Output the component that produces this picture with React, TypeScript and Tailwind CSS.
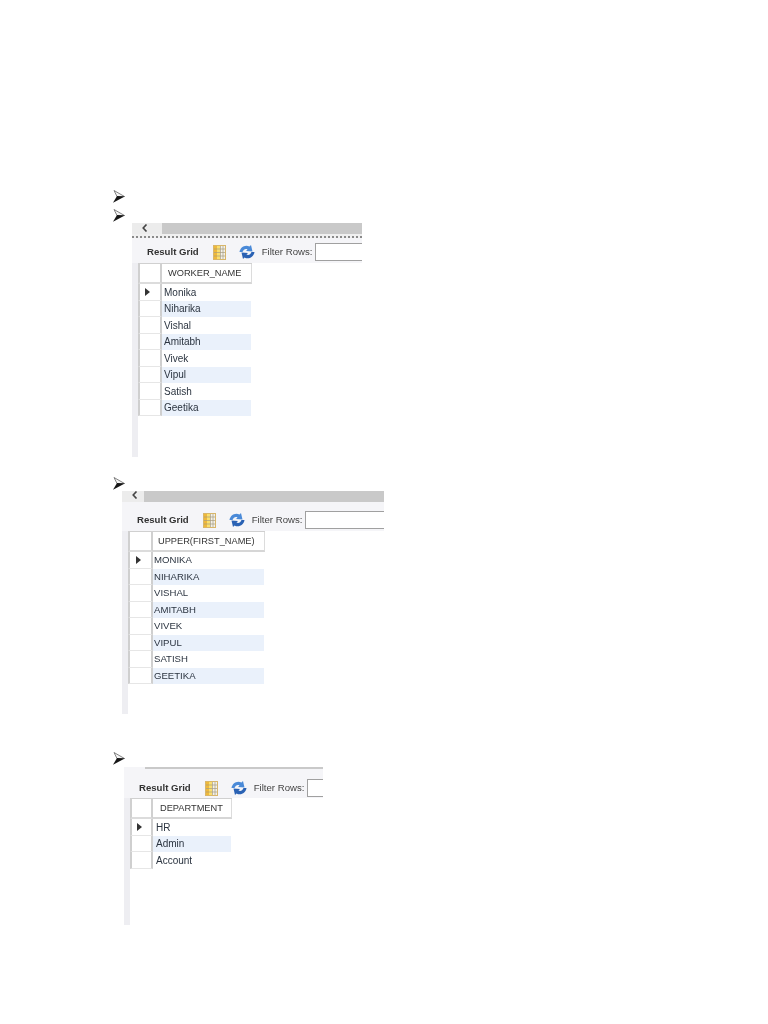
import React from "react";

function Bullet() {
  return (
    <svg width="12" height="13" viewBox="0 0 12 13" className="block">
      <path d="M1 .5 11.500 6.500H4Z" fill="#f4f4f4" stroke="#777" strokeWidth="0.9" />
      <path d="M4 6 11.800 6.500 0 12.800Z" fill="#161616" />
    </svg>
  );
}

function ColumnsIcon() {
  return (
    <svg width="13" height="15" viewBox="0 0 13 15" className="block">
      <rect x="0.500" y="0.500" width="12" height="14" fill="#f3f1ea" stroke="#d8b66a" />
      <rect x="1" y="1" width="3" height="13" fill="#f0b93a" />
      <rect x="4" y="1" width="3" height="13" fill="#fadf6e" />
      <path d="M1 4h11M1 7.500h11M1 11h11M7.500 1v13M10 1v13" stroke="#a89c80" strokeWidth="0.7" fill="none" />
    </svg>
  );
}

function RefreshIcon() {
  return (
    <svg width="16" height="14" viewBox="0 0 16 14" className="block">
      <path d="M.5 7C1 2.500 6 -1 10.500 1.500L12 0 13.500 6.500 7 6 8.500 4.500C6.500 3.500 4.500 4.500 3.500 7Z" fill="#4a8ad8" />
      <path d="M15.500 7C15 11.500 10 15 5.500 12.500L4 14 2.500 7.500 9 8 7.500 9.500C9.500 10.500 11.500 9.500 12.500 7Z" fill="#2a62b4" />
    </svg>
  );
}

function ChevronLeft() {
  return (
    <svg width="6" height="8" viewBox="0 0 6 8" className="block">
      <path d="M4.500 .5 1.200 4l3.300 3.500" fill="none" stroke="#444" strokeWidth="1.600" />
    </svg>
  );
}

type GridProps = {
  header: string;
  rows: string[];
  className: string;
  topClass: string;
  stubClass: string;
  headerClass: string;
  cellClass: string;
  headPad: string;
  slider: React.ReactNode;
};

function ResultGrid({ header, rows, className, topClass, stubClass, headerClass, cellClass, headPad, slider }: GridProps) {
  return (
    <div className={`overflow-hidden flex flex-col bg-white ${className}`}>
      {slider}
      <div className={`flex items-center bg-[#f5f5f8] pl-[8px] shrink-0 ${topClass}`}>
        <div className="w-px h-[15px] bg-[#b5b5b5]" />
        <span className="ml-[7px] text-[9.600px] font-bold text-[#333] whitespace-nowrap">Result Grid</span>
        <div className="ml-[7px] w-px h-[15px] bg-[#b5b5b5]" />
        <div className="ml-[7px]"><ColumnsIcon /></div>
        <div className="ml-[13px]"><RefreshIcon /></div>
        <span className="ml-[7px] text-[9.600px] text-[#444] whitespace-nowrap">Filter Rows:</span>
        <div className="ml-[3px] h-[18px] w-[100px] shrink-0 border border-[#a0a0a0] bg-white" />
      </div>
      <div className="flex-1 flex bg-white">
        <div className="w-[6px] bg-[#eeeef2] shrink-0" />
        <div className="flex flex-col">
          <div className="flex h-[21px] border-t border-[#d0d0d0]">
            <div className={`${stubClass} border-l-2 border-r-2 border-b-2 border-l-[#d0d0d0] border-r-[#d0d0d0] border-b-[#dcdcdc]`} />
            <div className={`${headerClass} ${headPad} pt-[1px] flex items-center border-r border-b-2 border-r-[#dcdcdc] border-b-[#d6d6d6] text-[9.250px] text-[#333] whitespace-nowrap`}>
              {header}
            </div>
          </div>
          {rows.map((row, i) => (
            <div key={row} className="flex h-[16.500px]">
              <div className={`${stubClass} flex items-center justify-center border-l-2 border-r-2 border-b border-l-[#cfcfcf] border-r-[#cfcfcf] border-b-[#e6e6e6]`}>
                {i === 0 && <div className="w-0 h-0 border-y-[4.500px] border-y-transparent border-l-[5px] border-l-[#333] mr-[5px]" />}
              </div>
              <div className={`${cellClass} flex items-center text-[#2b3440] whitespace-nowrap ${i % 2 === 1 ? "bg-[#eaf1fb]" : "bg-white"}`}>
                {row}
              </div>
            </div>
          ))}
        </div>
      </div>
    </div>
  );
}

const workers = ["Monika", "Niharika", "Vishal", "Amitabh", "Vivek", "Vipul", "Satish", "Geetika"];

export default function App() {
  return (
    <div className="relative w-[768px] h-[1024px] bg-white overflow-hidden pt-[190px] pl-[113px] font-['Liberation_Sans',Arial,sans-serif] blur-[0.3px]">
      <Bullet />
      <div className="mt-[6px]"><Bullet /></div>
      <ResultGrid
        className="ml-[19px] mt-[1px] w-[230px] h-[234px]"
        topClass="h-[25px] pt-[3px]"
        stubClass="w-[24px]"
        headerClass="w-[90px]"
        cellClass="w-[89px] pl-[2px] text-[10px]"
        headPad="pl-[6px]"
        header="WORKER_NAME"
        rows={workers}
        slider={
          <>
            <div className="flex h-[11px] bg-[#ececec] shrink-0">
              <div className="w-[30px] pl-[10px] pt-[1px]"><ChevronLeft /></div>
              <div className="flex-1 bg-[#c9c9c9]" />
            </div>
            <div className="h-[4px] shrink-0 border-b-2 border-dotted border-[#8a8a8a] bg-[#f0f0f0]" />
          </>
        }
      />
      <div className="mt-[20px]"><Bullet /></div>
      <ResultGrid
        className="ml-[9px] mt-[1px] w-[262px] h-[223px]"
        topClass="h-[29px] pt-[7px]"
        stubClass="w-[25px]"
        headerClass="w-[112px]"
        cellClass="w-[111px] pl-[1px] text-[9.600px]"
        headPad="pl-[5px]"
        header="UPPER(FIRST_NAME)"
        rows={workers.map((w) => w.toUpperCase())}
        slider={
          <div className="flex h-[11px] bg-[#ececec] shrink-0">
            <div className="w-[22px] pl-[10px]"><ChevronLeft /></div>
            <div className="flex-1 bg-[#c9c9c9]" />
          </div>
        }
      />
      <div className="mt-[38px]"><Bullet /></div>
      <ResultGrid
        className="ml-[11px] mt-[2px] w-[199px] h-[158px]"
        topClass="h-[29px] pt-[9px]"
        stubClass="w-[23px]"
        headerClass="w-[79px]"
        cellClass="w-[78px] pl-[3px] text-[10px]"
        headPad="pl-[7px]"
        header="DEPARTMENT"
        rows={["HR", "Admin", "Account"]}
        slider={
          <div className="flex h-[2px] bg-[#f5f5f8] shrink-0">
            <div className="w-[21px]" />
            <div className="flex-1 bg-[#c9c9c9]" />
          </div>
        }
      />
    </div>
  );
}
